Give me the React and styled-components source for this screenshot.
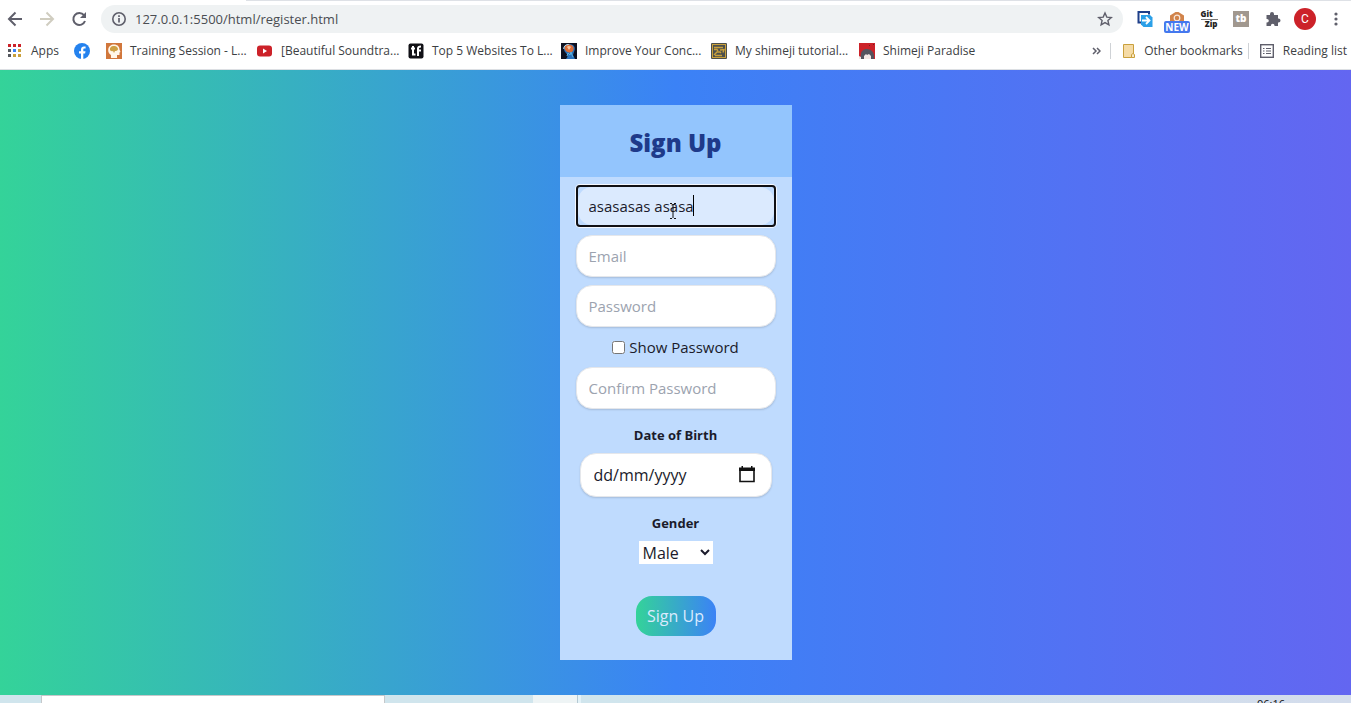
import React from 'react';
import styled, { createGlobalStyle, css } from 'styled-components';

const Global = createGlobalStyle`
  * { box-sizing: border-box; }
  body { margin: 0; font-family: "Open Sans", "Noto Sans", sans-serif; color: #1b1b2b; }
  button, input, select { font: inherit; color: inherit; }
`;

const Screen = styled.div`
  display: flex;
  flex-direction: column;
  height: 100vh;
  overflow: hidden;
`;

const Chrome = styled.header`
  flex: none;
  background: #fff;
  border-bottom: 1px solid #dcdfe3;
`;

const TabEdge = styled.div`
  height: 1px;
  margin-left: 246px;
  background: #dee1e6;
`;

const Toolbar = styled.div`
  display: flex;
  align-items: center;
  height: 36px;
  padding-left: 7px;
`;

const IconButton = styled.button`
  display: flex;
  flex: none;
  align-items: center;
  justify-content: center;
  width: ${p => p.$w || 32}px;
  height: 28px;
  padding: 0;
  border: 0;
  background: none;
  color: #5f5f6b;
`;

const NavButtons = styled.nav`
  display: flex;
  flex: none;
  gap: 16px;
  margin-right: 14px;
`;

const AddressBar = styled.div`
  display: flex;
  flex: 1;
  align-items: center;
  height: 28px;
  padding: 0 2px 0 10px;
  border-radius: 14px;
  background: #eff2f3;
`;

const Address = styled.input`
  flex: 1;
  min-width: 0;
  margin-left: 8px;
  padding: 0;
  border: 0;
  outline: 0;
  background: none;
  font-size: 13px;
  line-height: 20px;
  color: #4a4d52;
`;

const Extensions = styled.div`
  display: flex;
  flex: none;
  align-items: center;
  margin-left: 6px;
`;

const Extension = styled(IconButton)`
  position: relative;
`;

const NewBadge = styled.span`
  position: absolute;
  left: 3px;
  top: 16px;
  width: 26px;
  border-radius: 2px;
  background: #4478ee;
  color: #fff;
  font-size: 10px;
  font-weight: 700;
  line-height: 12px;
  text-align: center;
`;

const GitZip = styled.span`
  display: flex;
  flex-direction: column;
  width: 17px;
  color: #222;
  font-size: 8px;
  font-weight: 800;
  line-height: 8px;
  text-align: left;
`;

const ZipLine = styled.span`
  margin-top: 1px;
  border-top: 1px solid #777;
  text-align: right;
`;

const Tube = styled.span`
  width: 16px;
  height: 16px;
  background: #a1988f;
  color: #fff;
  font-size: 10px;
  font-weight: 800;
  line-height: 15px;
`;

const Avatar = styled.span`
  width: 22px;
  height: 22px;
  border-radius: 50%;
  background: #cc2229;
  color: #fff;
  font-family: Roboto, sans-serif;
  font-size: 12px;
  line-height: 22px;
`;

const Bookmarks = styled.nav`
  display: flex;
  align-items: center;
  height: 32px;
  padding: 0 3px 4px 8px;
  white-space: nowrap;
`;

const Bookmark = styled.a`
  display: flex;
  flex: none;
  align-items: center;
  gap: 8px;
  width: ${p => (p.$w ? p.$w + 'px' : 'auto')};
  margin-right: ${p => p.$after || 16}px;
  color: #3c4043;
  font-size: 12px;
  line-height: 16px;
  text-decoration: none;
  svg { flex: none; }
`;

const Spacer = styled.div`
  flex: 1;
`;

const Divider = styled.span`
  width: 1px;
  height: 16px;
  margin-left: ${p => p.$before || 0}px;
  margin-right: 11px;
  background: #cfd2d6;
`;

const Page = styled.main`
  flex: 1;
  min-height: 0;
  padding-top: 35px;
  background: linear-gradient(to right, #34d399, #3b82f6, #6366f1);
`;

const Card = styled.form`
  width: fit-content;
  margin: 0 auto;
  padding-bottom: 24px;
  background: #bfdbfe;
`;

const Title = styled.h1`
  margin: 0;
  padding: 22px 0 18px;
  background: #93c5fd;
  color: #1e3a8a;
  font-size: 24px;
  font-weight: 800;
  line-height: 32px;
  text-align: center;
`;

const Fields = styled.div`
  display: flex;
  flex-direction: column;
  align-items: center;
  gap: 8px;
  padding: 8px 16px 0;
`;

const box = css`
  border: 1px solid #e5e7eb;
  border-radius: 16px;
  background: #fff;
  box-shadow: 0 1px 2px rgba(0, 0, 0, 0.14);
`;

const Field = styled.input`
  ${box}
  width: 200px;
  height: 42px;
  padding: 8px 12px;
  font-size: 15px;
  line-height: 24px;
  outline: 0;
  &::placeholder { color: #9ca3af; opacity: 1; }
`;

const FocusRing = styled.div`
  position: relative;
  width: 200px;
  height: 42px;
  border: 2px solid #101014;
  border-radius: 4px;
  box-shadow: 0 0 0 1px #f4f8ff;
`;

const ActiveField = styled(Field)`
  display: block;
  width: 100%;
  height: 38px;
  padding: 0 11px;
  border: 0;
  border-radius: 14px;
  background: #dbeafe;
  box-shadow: none;
`;

const Caret = styled.span`
  position: absolute;
  left: 115px;
  top: 8px;
  width: 1px;
  height: 21px;
  background: #000;
`;

const Pointer = styled.svg`
  position: absolute;
  left: 91px;
  top: 16px;
`;

const Check = styled.label`
  display: flex;
  align-items: center;
  gap: 4px;
  font-size: 15px;
  line-height: 24px;
  input { width: 13px; height: 13px; margin: 0; }
`;

const Label = styled.label`
  margin-top: 8px;
  font-size: 13px;
  font-weight: 700;
  line-height: 20px;
`;

const DateBox = styled.div`
  ${box}
  display: flex;
  align-items: center;
  width: 192px;
  height: 44px;
  padding: 0 8px 0 13px;
`;

const DateInput = styled.input`
  flex: 1;
  min-width: 0;
  padding: 0;
  border: 0;
  outline: 0;
  background: none;
  font-size: 16px;
  line-height: 24px;
  &::placeholder { color: #1b1b2b; opacity: 1; }
`;

const Select = styled.select`
  width: 74px;
  height: 23px;
  padding: 0;
  border: 0;
  border-radius: 0;
  background: #fff;
  font-size: 16px;
  outline: 0;
`;

const Submit = styled.button`
  width: 80px;
  height: 40px;
  margin-top: 24px;
  padding: 0;
  border: 0;
  border-radius: 16px;
  background: linear-gradient(to right, #34d399, #3b82f6);
  color: #dbeafe;
  font-size: 16px;
  line-height: 24px;
`;

const Taskbar = styled.footer`
  display: flex;
  flex: none;
  height: 8px;
  overflow: hidden;
  background: linear-gradient(to right, #d0e5ed 45%, #d3dcec);
`;

const TaskSearch = styled.div`
  width: 344px;
  margin-left: 41px;
  border: 1px solid #c6c8ca;
  border-bottom: 0;
  background: #fff;
`;

const TaskItem = styled.div`
  width: 45px;
  margin-left: 148px;
  border-right: 1px solid #b5c9d3;
  background: #eef4f5;
`;

const TaskGap = styled.div`
  width: 3px;
  background: #e3f2f8;
`;

const Clock = styled.time`
  margin: 3px 66px 0 auto;
  font-size: 11px;
  line-height: 12px;
  color: #111;
`;

const AppsIcon = () => (
  <svg width="15" height="14" viewBox="0 0 15 14">
    {['#cc2229', '#cc2229', '#cc2229', '#55585e', '#3b82f6', '#c9a03c', '#55585e', '#c9a03c', '#c9a03c'].map((c, i) => (
      <rect key={i} x={(i % 3) * 5} y={Math.floor(i / 3) * 5} width="3" height="3" fill={c} />
    ))}
  </svg>
);

const FacebookIcon = () => (
  <svg width="16" height="16" viewBox="0 0 16 16">
    <circle cx="8" cy="8" r="8" fill="#2482ee" />
    <path d="M7 16v-5.500H5V8.200h2V6.500c0-2 1.200-3.100 3-3.100l1.600.1v2h-1c-1 0-1.300.5-1.300 1.200v1.500h2.200l-.4 2.300H9.300V16z" fill="#fff" />
  </svg>
);

const BrainIcon = () => (
  <svg width="16" height="16" viewBox="0 0 16 16">
    <rect width="16" height="16" fill="#d1773c" />
    <path d="M5 15v-3C3 11 2 9 2.200 6.500 2.500 3.500 5 1.500 8 1.500c3.500 0 5.500 2.300 5.500 5l1 2.500-1 .5v2.500h-2.500v3z" fill="#fff6e8" />
    <path d="M4 7c-.5-2 1-4 3.500-4C10 2.500 12 4 12 6c0 1.500-1.500 2-3 2l-1 2-1-2C5.500 8.500 4.500 8 4 7z" fill="#cda044" />
  </svg>
);

const YoutubeIcon = () => (
  <svg width="16" height="16" viewBox="0 0 16 16">
    <rect x="0" y="2.500" width="15" height="11" rx="3" fill="#cc2229" />
    <path d="M6 5.500v5l4-2.500z" fill="#fff" />
  </svg>
);

const TfIcon = () => (
  <svg width="16" height="16" viewBox="0 0 16 16">
    <rect x="0.500" y="0.500" width="15" height="15" rx="2" fill="#111116" />
    <path d="M5 3v8.500h2.500M3 5.500h4M10 13V5.500q0-2 3-2M9 7.500h4" fill="none" stroke="#fff" strokeWidth="2" />
  </svg>
);

const MindIcon = () => (
  <svg width="16" height="16" viewBox="0 0 16 16">
    <rect width="16" height="16" fill="#0d1020" />
    <path d="M5 16c2-2 2-4 0-6C1.500 7 2.500 1 8 1s7 4 5 8l-1 3 2 4z" fill="#2b73bd" />
    <path d="M3.500 4.500c1-4 8-4 9 0 .5 3-1.500 5-3.500 5s-5.500-1-5.500-5z" fill="#dc6d37" />
    <path d="M2.700 6c0-3 2-4.500 5-4.500" stroke="#bfe3f0" fill="none" />
    <path d="M6 4c1-1.500 3-1 4 0L8 7z" fill="#f4c5a0" />
    <path d="M6 13l1-3 2 2 1-3 1 3 1 2" stroke="#5bb2e0" fill="none" />
  </svg>
);

const TutorialIcon = () => (
  <svg width="16" height="16" viewBox="0 0 16 16">
    <rect width="16" height="16" rx="1" fill="#4c4f4c" />
    <rect x="1.500" y="1.500" width="13" height="13" fill="#4d504d" stroke="#c9a03c" />
    <path d="M3 4.500h9M3 6.500h3l1 1.500M9 7l4-.5-1 3M3 12l3-3h3l1 1M4 12.500h7" fill="none" stroke="#c9a03c" strokeWidth="1.400" />
  </svg>
);

const ParadiseIcon = () => (
  <svg width="16" height="16" viewBox="0 0 16 16">
    <rect width="16" height="16" fill="#cc2229" />
    <path d="M1 16l1-5c0-3 3-5 6-5 4 0 7 3 7 7v3z" fill="#55535e" />
    <path d="M5 16v-3l2-2 1 1 2-1 2 2v3z" fill="#f3e6e4" />
    <path d="M0 13l2 1v2H0z" fill="#f3e6e4" />
    <path d="M10 2h1v1h-1zM14 1h1v1h-1z" fill="#7a1b20" />
  </svg>
);

const BOOKMARKS = [
  { Icon: FacebookIcon, w: 16 },
  { Icon: BrainIcon, text: 'Training Session - L...', w: 135 },
  { Icon: YoutubeIcon, text: '[Beautiful Soundtra...', w: 135 },
  { Icon: TfIcon, text: 'Top 5 Websites To L...', w: 137 },
  { Icon: MindIcon, text: 'Improve Your Conc...', w: 134 },
  { Icon: TutorialIcon, text: 'My shimeji tutorial...', w: 132 },
  { Icon: ParadiseIcon, text: 'Shimeji Paradise' },
];

const line = { fill: 'none', stroke: 'currentColor', strokeWidth: 2 };

export default function App() {
  return (
    <Screen>
      <Global />
      <Chrome>
        <TabEdge />
        <Toolbar>
          <NavButtons>
            <IconButton $w={16} aria-label="Back">
              <svg width="16" height="16" viewBox="0 0 16 16" {...line}><path d="M15 8H2.500M8.500 1.500L2 8l6.500 6.500" /></svg>
            </IconButton>
            <IconButton $w={16} aria-label="Forward">
              <svg width="16" height="16" viewBox="0 0 16 16" {...line} stroke="#d0cdc0"><path d="M1 8h12.500M7.500 1.500L14 8l-6.500 6.500" /></svg>
            </IconButton>
            <IconButton $w={16} aria-label="Reload">
              <svg width="16" height="16" viewBox="0 0 16 16" {...line}>
                <path d="M13 4.200A6 6 0 1 0 14 10" />
                <path d="M15 1v6H9z" fill="currentColor" stroke="none" />
              </svg>
            </IconButton>
          </NavButtons>
          <AddressBar>
            <svg width="16" height="16" viewBox="0 0 16 16" fill="none" stroke="#5f5f6b">
              <circle cx="8" cy="8" r="6.200" strokeWidth="1.600" />
              <path d="M8 7v4.500M8 4.300v1.700" strokeWidth="1.700" />
            </svg>
            <Address aria-label="Address" defaultValue="127.0.0.1:5500/html/register.html" />
            <IconButton aria-label="Bookmark this page">
              <svg width="16" height="16" viewBox="0 0 16 16" fill="none" stroke="currentColor" strokeWidth="1.400">
                <path d="M8 2l1.800 4.100 4.500.4-3.400 3 1 4.400L8 11.600l-3.900 2.300 1-4.400-3.400-3 4.500-.4z" />
              </svg>
            </IconButton>
          </AddressBar>
          <Extensions>
            <Extension aria-label="Share">
              <svg width="16" height="16" viewBox="0 0 16 16">
                <path d="M4 11.500H1.500V1H12v2.500" fill="none" stroke="#1e3f8a" strokeWidth="2" />
                <path d="M4 4h9l2.500 2.500V16H6.500L4 13.500z" fill="#2ba0e8" />
                <path d="M5 9.500h7M9 6l3.500 3.500L9 13" fill="none" stroke="#fff" strokeWidth="1.800" />
              </svg>
            </Extension>
            <Extension aria-label="Camera">
              <svg width="16" height="16" viewBox="0 0 16 16">
                <path d="M1 4.500l4-2.500L6.500 1h3L11 2l4 2.500V13H1z" fill="#d1834a" />
                <circle cx="8" cy="7" r="2.800" fill="none" stroke="#f8e8dc" strokeWidth="1.200" />
              </svg>
              <NewBadge>NEW</NewBadge>
            </Extension>
            <Extension aria-label="GitZip"><GitZip><span>Git</span><ZipLine>Zip</ZipLine></GitZip></Extension>
            <Extension aria-label="Video tools"><Tube>tb</Tube></Extension>
            <Extension aria-label="Extensions">
              <svg width="16" height="16" viewBox="0 0 16 16" fill="#5f5f6b">
                <path d="M1.500 4H5V3a2 2 0 0 1 4 0v1h4v3.500h.5a2 2 0 0 1 0 4H13V15H9.500v-.5a1.800 1.800 0 0 0-3.600 0v.5H1.500v-3.500H2a1.800 1.800 0 0 0 0-3.600h-.5z" />
              </svg>
            </Extension>
            <Extension aria-label="Profile"><Avatar>C</Avatar></Extension>
            <Extension $w={30} aria-label="Menu">
              <svg width="4" height="14" viewBox="0 0 4 14" fill="#5f5f6b">
                <circle cx="2" cy="2" r="1.600" /><circle cx="2" cy="7" r="1.600" /><circle cx="2" cy="12" r="1.600" />
              </svg>
            </Extension>
          </Extensions>
        </Toolbar>
        <Bookmarks aria-label="Bookmarks">
          <Bookmark href="#apps" $after={15}><AppsIcon />Apps</Bookmark>
          {BOOKMARKS.map(({ Icon, text, w }, i) => (
            <Bookmark key={i} href="#bookmark" $w={w} aria-label={text || 'Facebook'}><Icon />{text}</Bookmark>
          ))}
          <Spacer />
          <IconButton $w={10} aria-label="More bookmarks">
            <svg width="9" height="8" viewBox="0 0 9 8" fill="none" stroke="currentColor" strokeWidth="1.500"><path d="M1 1l3 3-3 3M5 1l3 3-3 3" /></svg>
          </IconButton>
          <Divider $before={9} />
          <Bookmark href="#other" $after={5}>
            <svg width="14" height="16" viewBox="0 0 14 16">
              <path d="M1.500 1.500h10v13h-10z" fill="#f5dba6" stroke="#c9a03c" />
              <path d="M9.500 14.500v-3l1.500-1 1.500 1v3z" fill="#f9e8c4" stroke="#c9a03c" />
            </svg>
            Other bookmarks
          </Bookmark>
          <Divider />
          <Bookmark href="#reading" $after={1}>
            <svg width="15" height="14" viewBox="0 0 15 14" fill="none" stroke="#5f5f6b">
              <rect x="0.700" y="0.700" width="12.600" height="12.600" strokeWidth="1.400" />
              <path d="M3 4.500h1.500M6 4.500h5M3 7h1.500M6 7h5M3 9.500h1.500M6 9.500h5" />
            </svg>
            Reading list
          </Bookmark>
        </Bookmarks>
      </Chrome>

      <Page>
        <Card onSubmit={e => e.preventDefault()}>
          <Title>Sign Up</Title>
          <Fields>
            <FocusRing>
              <ActiveField aria-label="Name" defaultValue="asasasas asasa" />
              <Caret />
              <Pointer width="8" height="16" viewBox="0 0 8 16" fill="none" stroke="#111"><path d="M1 .5h2M5 .5h2M4 1v14M1 15.500h2M5 15.500h2" /></Pointer>
            </FocusRing>
            <Field type="email" aria-label="Email" placeholder="Email" />
            <Field type="password" aria-label="Password" placeholder="Password" />
            <Check><input type="checkbox" />Show Password</Check>
            <Field type="password" aria-label="Confirm Password" placeholder="Confirm Password" />
            <Label htmlFor="dob">Date of Birth</Label>
            <DateBox>
              <DateInput id="dob" placeholder="dd/mm/yyyy" />
              <IconButton type="button" aria-label="Open calendar">
                <svg width="16" height="18" viewBox="0 0 16 18">
                  <path d="M1 3.500h14v12H1z" fill="none" stroke="#111" strokeWidth="1.600" />
                  <path d="M0 1.500h2.500V0h1.500v1.500h8V0h1.500v1.500H16V5H0z" fill="#111" />
                </svg>
              </IconButton>
            </DateBox>
            <Label htmlFor="gender">Gender</Label>
            <Select id="gender" defaultValue="Male">
              <option>Male</option>
              <option>Female</option>
            </Select>
            <Submit type="submit">Sign Up</Submit>
          </Fields>
        </Card>
      </Page>

      <Taskbar>
        <TaskSearch />
        <TaskItem />
        <TaskGap />
        <Clock>06:16</Clock>
      </Taskbar>
    </Screen>
  );
}
